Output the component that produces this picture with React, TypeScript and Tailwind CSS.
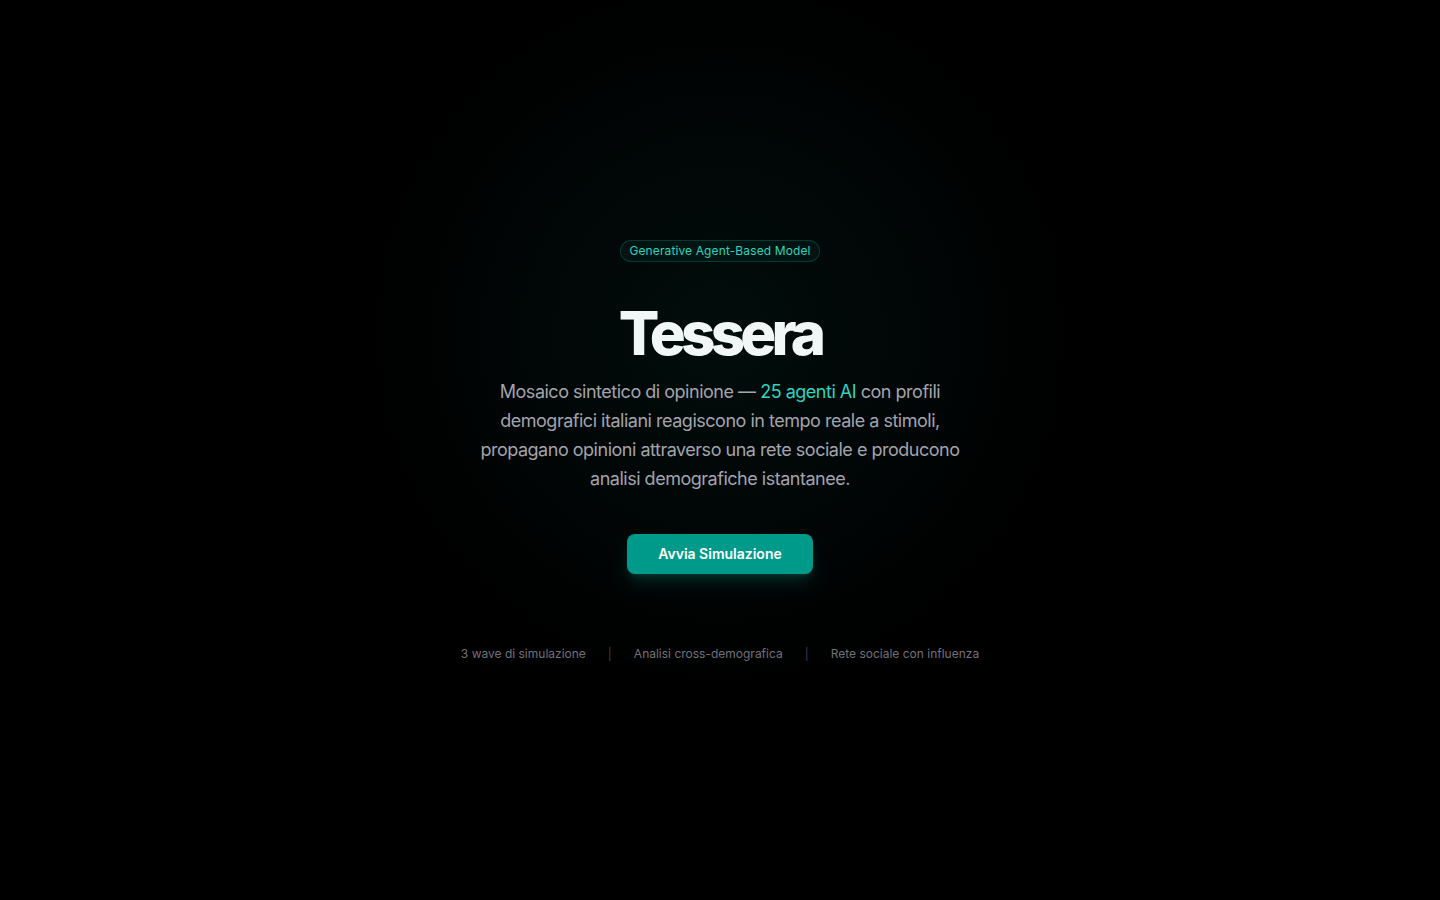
const features = [
  "3 wave di simulazione",
  "Analisi cross-demografica",
  "Rete sociale con influenza",
];

export default function App() {
  return (
    <main className="flex min-h-screen w-full items-center justify-center bg-black bg-[radial-gradient(360px_circle_at_50%_37%,rgba(20,184,166,0.075),rgba(20,184,166,0.03)_55%,transparent_100%)] pt-[2px] font-['Inter',sans-serif] text-center">
      <div className="flex flex-col items-center">
        <span className="rounded-full border border-teal-400/20 bg-teal-400/5 px-2 py-0.5 text-xs leading-4 text-[#2dd4bf] tracking-[0.01em]">
          Generative Agent-Based Model
        </span>

        <h1 className="mt-[41px] text-[60px] font-extrabold leading-none tracking-[-0.08em] text-[#f1f7f6]">
          Tessera
        </h1>

        <p className="mt-[14px] max-w-[484px] text-lg leading-[29px] tracking-[-0.027em] text-[#a3a3ab]">
          Mosaico sintetico di opinione —{" "}
          <span className="text-[#2dd4bf]">25 agenti AI</span> con profili
          demografici italiani reagiscono in tempo reale a stimoli, propagano
          opinioni attraverso una rete sociale e producono analisi
          demografiche istantanee.
        </p>

        <button className="mt-[41px] h-10 w-[186px] rounded-lg bg-[#009a8b] text-sm font-semibold text-white shadow-lg shadow-teal-500/20">
          Avvia Simulazione
        </button>

        <div className="mt-[72px] flex items-center gap-[22px] text-xs text-zinc-500">
          {features.map((f, i) => (
            <div key={f} className="flex items-center gap-[22px]">
              {i > 0 ? <span className="text-zinc-700">|</span> : null}
              <span>{f}</span>
            </div>
          ))}
        </div>
      </div>
    </main>
  );
}
